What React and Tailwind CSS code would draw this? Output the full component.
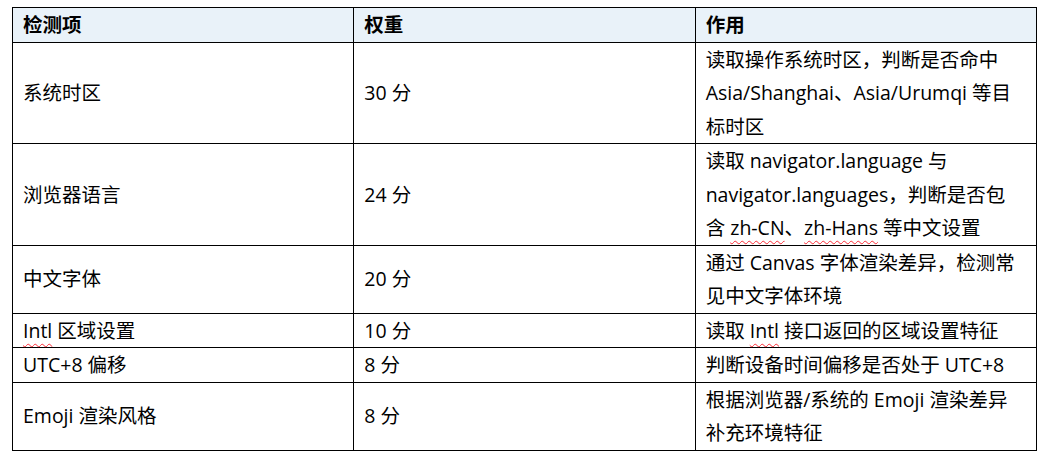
import React from 'react';

const Spell = ({ children }) => (
  <span className="underline decoration-wavy decoration-red-500 decoration-1 underline-offset-[5px]">{children}</span>
);

const rows = [
  {
    item: '系统时区',
    weight: '30 分',
    desc: [
      '读取操作系统时区，判断是否命中',
      'Asia/Shanghai、Asia/Urumqi 等目',
      '标时区',
    ],
  },
  {
    item: '浏览器语言',
    weight: '24 分',
    desc: [
      '读取 navigator.language 与',
      'navigator.languages，判断是否包',
      <>含 <Spell>zh-CN</Spell>、<Spell>zh-Hans</Spell> 等中文设置</>,
    ],
  },
  {
    item: '中文字体',
    weight: '20 分',
    desc: ['通过 Canvas 字体渲染差异，检测常', '见中文字体环境'],
  },
  {
    item: <><Spell>Intl</Spell> 区域设置</>,
    weight: '10 分',
    desc: [<>读取 <Spell>Intl</Spell> 接口返回的区域设置特征</>],
  },
  {
    item: 'UTC+8 偏移',
    weight: '8 分',
    desc: ['判断设备时间偏移是否处于 UTC+8'],
  },
  {
    item: 'Emoji 渲染风格',
    weight: '8 分',
    desc: ['根据浏览器/系统的 Emoji 渲染差异', '补充环境特征'],
  },
];

const cell = 'border border-black px-[10px] py-0 align-middle';

export default function App() {
  return (
    <div
      className="w-[1050px] h-[458px] bg-white pt-[7px] pl-[12px] text-black text-[19.5px] leading-[33.5px]"
      style={{ fontFamily: '"Open Sans", "Noto Sans CJK SC", sans-serif' }}
    >
      <table className="w-[1025px] table-fixed border-collapse">
        <thead>
          <tr className="bg-[#e9f2f9] font-bold">
            <th className={`${cell} w-1/3 text-left`}>检测项</th>
            <th className={`${cell} w-1/3 text-left`}>权重</th>
            <th className={`${cell} w-1/3 text-left`}>作用</th>
          </tr>
        </thead>
        <tbody>
          {rows.map((r, i) => (
            <tr key={i}>
              <td className={cell}>{r.item}</td>
              <td className={cell}>{r.weight}</td>
              <td className={cell}>
                {r.desc.map((line, j) => (
                  <div key={j} className="whitespace-nowrap">{line}</div>
                ))}
              </td>
            </tr>
          ))}
        </tbody>
      </table>
    </div>
  );
}
